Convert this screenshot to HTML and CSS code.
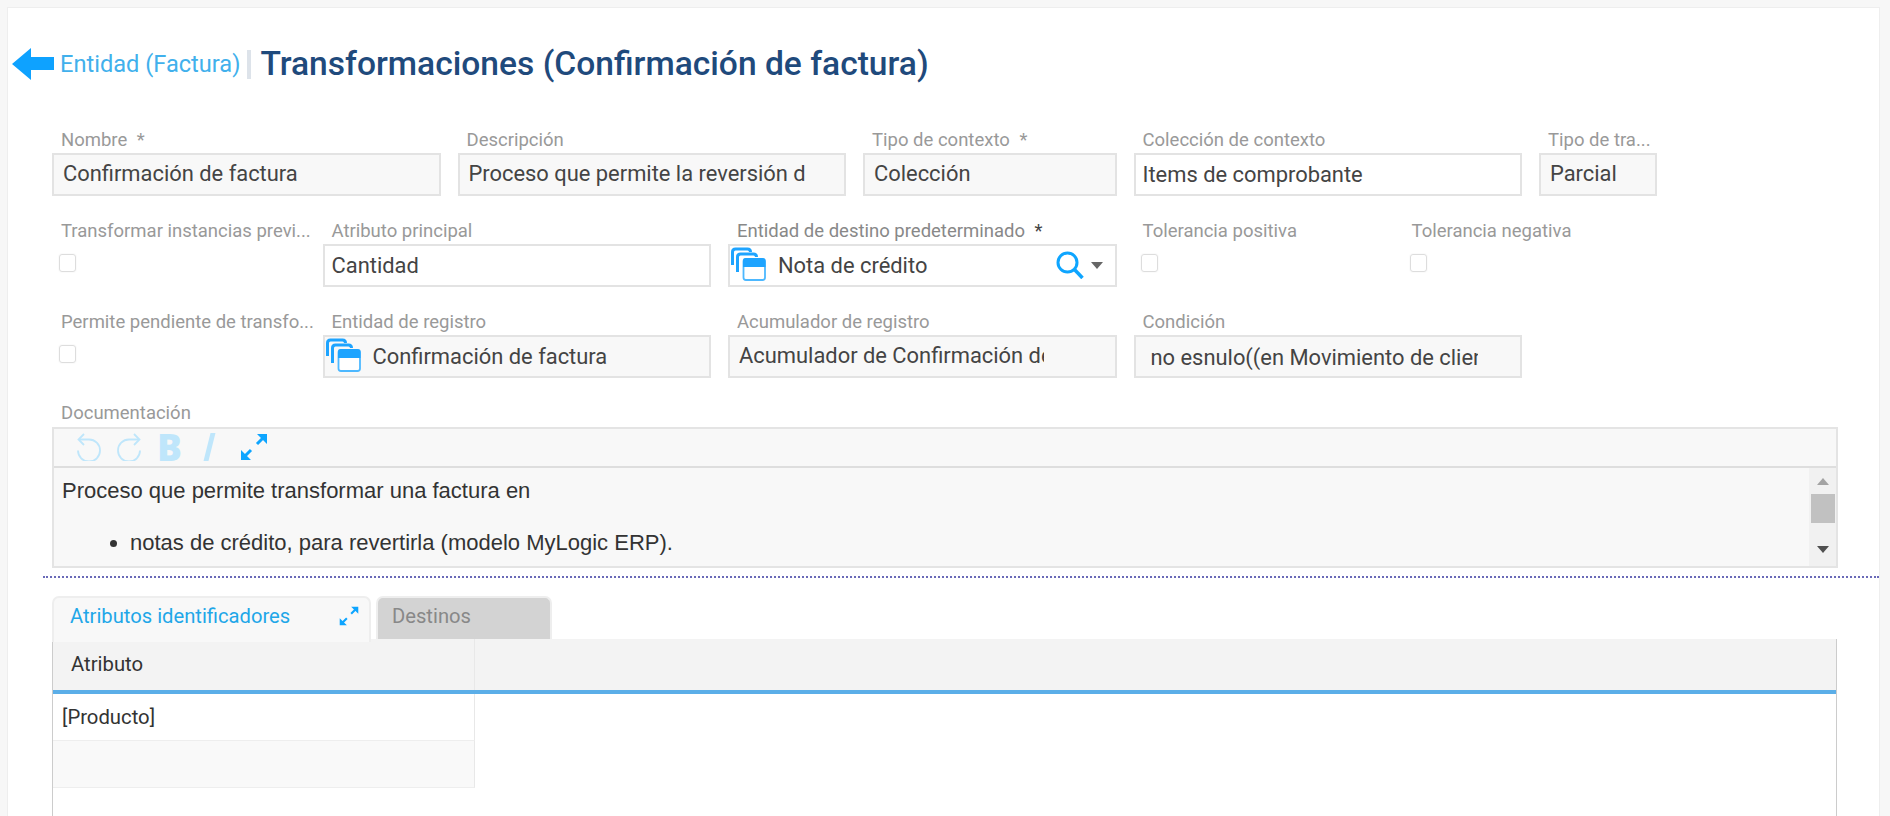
FILE: index.html
```html
<!DOCTYPE html>
<html lang="es">
<head>
<meta charset="UTF-8">
<title>Transformaciones (Confirmación de factura)</title>
<link rel="stylesheet" href="styles.css">
</head>
<body>
<svg class="defs" width="0" height="0">
  <symbol id="i-stack" viewBox="0 0 35 34">
    <path d="M1.500 18V5q0-3 3-3h12q3 0 3 3" fill="none" stroke="#1ea4ff" stroke-width="3"/>
    <path d="M6.500 25V10q0-3 3-3h13q3 0 3 3" fill="none" stroke="#1ea4ff" stroke-width="3"/>
    <rect x="12.500" y="12" width="21.500" height="21" rx="2.500" fill="#fff" stroke="#4db8ff" stroke-width="1.800"/>
    <path d="M12 20v-6q0-3 3-3h16q3.500 0 3.500 3v6z" fill="#1ea4ff"/>
  </symbol>
  <symbol id="i-expand" viewBox="0 0 28 28">
    <path d="M4 24L11 17M24 4L17 11" stroke="currentColor" stroke-width="3" fill="none"/>
    <path d="M1 17V27H11ZM27 11V1H17Z" fill="currentColor"/>
  </symbol>
</svg>

<div class="panel">
  <header class="head">
    <svg class="back" width="42" height="32" viewBox="0 0 42 32"><path d="M0 16L19 0V9H42V22H19V32Z" fill="#0ea2ff"/></svg>
    <a class="crumb">Entidad (Factura)</a>
    <span class="sep"></span>
    <h1>Transformaciones (Confirmación de factura)</h1>
  </header>

  <section class="form">
    <div class="row">
      <div class="field w-md"><label>Nombre <i>*</i></label><div class="box ro">Confirmación de factura</div></div>
      <div class="field w-md"><label>Descripción</label><div class="box ro"><span class="clip clip-desc">Proceso que permite la reversión d</span></div></div>
      <div class="field w-sm"><label>Tipo de contexto <i>*</i></label><div class="box ro">Colección</div></div>
      <div class="field w-md"><label>Colección de contexto</label><div class="box edit">Items de comprobante</div></div>
      <div class="field w-xs"><label>Tipo de tra...</label><div class="box ro">Parcial</div></div>
    </div>
    <div class="row">
      <div class="field w-sm"><label>Transformar instancias previ...</label><span class="check"></span></div>
      <div class="field w-md"><label>Atributo principal</label><div class="box edit">Cantidad</div></div>
      <div class="field w-md"><label class="dark">Entidad de destino predeterminado <i>*</i></label>
        <div class="box edit ent"><svg class="stack"><use href="#i-stack"/></svg><span class="grow">Nota de crédito</span>
          <svg class="search" width="28" height="28" viewBox="0 0 28 28"><circle cx="11.500" cy="11.500" r="9.500" fill="none" stroke="#0ea5ff" stroke-width="3"/><path d="M18 18l8.500 9" stroke="#0ea5ff" stroke-width="3.500" fill="none"/></svg>
          <span class="caret"></span></div></div>
      <div class="field w-chk"><label>Tolerancia positiva</label><span class="check"></span></div>
      <div class="field w-chk"><label>Tolerancia negativa</label><span class="check"></span></div>
    </div>
    <div class="row">
      <div class="field w-sm"><label>Permite pendiente de transfo...</label><span class="check"></span></div>
      <div class="field w-md"><label>Entidad de registro</label>
        <div class="box ro ent"><svg class="stack"><use href="#i-stack"/></svg><span class="grow">Confirmación de factura</span></div></div>
      <div class="field w-md"><label>Acumulador de registro</label><div class="box ro"><span class="clip clip-acum">Acumulador de Confirmación de</span></div></div>
      <div class="field w-md"><label>Condición</label><div class="box ro cond"><span class="clip clip-cond">no esnulo((en Movimiento de clien</span></div></div>
    </div>

    <div class="doc-field">
      <label>Documentación</label>
      <div class="doc">
        <div class="tools">
          <svg class="t-undo" width="26" height="28" viewBox="0 0 26 28"><path d="M3 6.500H13A11 11 0 1 1 2 17.500" fill="none" stroke="currentColor" stroke-width="1.800"/><path d="M8 1L2.500 6.500L8 12" fill="none" stroke="currentColor" stroke-width="1.800"/></svg>
          <svg class="t-undo" width="26" height="28" viewBox="0 0 26 28"><path d="M23 6.500H13A11 11 0 1 0 24 17.500" fill="none" stroke="currentColor" stroke-width="1.800"/><path d="M18 1L23.500 6.500L18 12" fill="none" stroke="currentColor" stroke-width="1.800"/></svg>
          <b class="t-b">B</b>
          <span class="t-i"></span>
          <svg class="t-exp" width="28" height="28"><use href="#i-expand"/></svg>
        </div>
        <div class="doc-body">
          <div class="doc-text">
            <p>Proceso que permite transformar una factura en</p>
            <ul><li>notas de crédito, para revertirla (modelo MyLogic ERP).</li></ul>
          </div>
          <div class="scroll"><span class="up"></span><span class="thumb"></span><span class="down"></span></div>
        </div>
      </div>
    </div>
  </section>

  <hr class="dots">

  <section class="detail">
    <nav class="tabs">
      <a class="tab on">Atributos identificadores<svg class="tab-exp" width="20" height="20"><use href="#i-expand"/></svg></a>
      <a class="tab">Destinos</a>
    </nav>
    <div class="grid">
      <div class="grid-head"><div class="cell">Atributo</div></div>
      <div class="grid-row"><div class="cell">[Producto]</div></div>
      <div class="grid-row alt"><div class="cell">&nbsp;</div></div>
    </div>
  </section>
</div>
</body>
</html>
```
FILE: styles.css
```css
*{box-sizing:border-box;margin:0}
html,body{height:816px;overflow:hidden}
body{background:#f7f7f7;font-family:Roboto,sans-serif;color:#444}
.defs{position:absolute}

.panel{margin:7px 10px 0 7px;background:#fff;border:1px solid #eee;border-bottom:0;height:809px;overflow:hidden}

/* header */
.head{display:flex;align-items:center;height:50px;margin-top:31px;padding-left:4px}
.back{flex:none}
.crumb{margin:-1px 0 0 6px;font-size:23.600px;color:#41b0ec}
.sep{width:4px;height:29px;margin:0 9px 0 7px;background:#dde3ea}
h1{margin-top:-2px;font-size:33.600px;font-weight:500;color:#1f4a7c}

/* form */
.form{padding:38.500px 0 0 44px}
.row{display:flex;gap:17px;margin-bottom:22.500px}
.field{display:flex;flex-direction:column;flex:none}
.w-xs{width:118px}
.w-sm{width:253.500px}
.w-md{width:388.500px}
.w-chk{width:252px}
label{display:block;height:25px;padding-left:9px;font-size:18.500px;line-height:24px;color:#999;white-space:nowrap}
label i{font-style:normal;margin-left:5px}
label.dark{color:#888}
label.dark i{color:#444}
.box{height:43.500px;border:2px solid #e3e3e3;padding:0 9px;font-size:21.900px;line-height:39px;white-space:nowrap;overflow:hidden}
.ro{background:#f8f8f8;line-height:38px}
.edit{background:#fff;padding-left:7px}
.clip{display:block;overflow:hidden}
.clip-desc{width:337px}
.clip-acum{width:305px}
.clip-cond{width:327px}
.cond{padding-left:15px;line-height:41px}
.check{display:block;width:17px;height:18px;margin:10px 0 0 7px;border:1px solid #ddd;border-radius:3px;box-shadow:0 0 2px #eee}

.ent{display:flex;align-items:center;padding:0 0 0 1px;line-height:normal}
.stack{width:35px;height:34px;flex:none;margin-right:12px;margin-bottom:2px}
.grow{flex:1}
.search{flex:none;margin-right:7px}
.caret{width:0;height:0;margin-right:12px;border:6px solid transparent;border-top:7px solid #666;border-bottom:0}

/* documentation */
.doc-field label{height:26px}
.doc{width:1786px;height:141px;border:2px solid #e4e4e4;background:#f8f8f8;display:flex;flex-direction:column}
.tools{height:39px;display:flex;align-items:center;border-bottom:2px solid #dedede;padding-left:22px;color:#bfe6fb;flex:none}
.t-undo{margin-right:14px}
.t-undo+.t-undo{margin-right:15px}
.t-b{font-family:"Open Sans",sans-serif;font-size:37px;font-weight:800;line-height:28px;width:26px}
.t-i{width:5px;height:28px;margin:0 28px 0 24px;background:#bfe6fb;transform:skewX(-14deg)}
.t-exp{color:#0ea5ff}
.doc-body{flex:1;display:flex;min-height:0}
.doc-text{flex:1;padding:10px 0 0 8px;font-family:"Liberation Sans",sans-serif;font-size:22px;line-height:26px;color:#333}
.doc-text ul{margin-top:26px;padding-left:68px}
.scroll{width:27px;background:#f1f1f1;display:flex;flex-direction:column;align-items:center}
.up,.down{width:0;height:0;border:6.500px solid transparent}
.up{margin-top:10px;border-bottom:7px solid #a3a3a3;border-top:0}
.thumb{width:24px;height:29px;margin-top:9px;background:#c1c1c1}
.down{margin-top:23px;border-top:7px solid #505050;border-bottom:0}

.dots{margin:8px 0 0 35px;border:0;border-top:2px dotted #6a6ab8}

/* tabs and grid */
.detail{margin:18px 0 0 44px;width:1785px}
.tabs{display:flex;height:43px;gap:5px;align-items:flex-start}
.tab{display:flex;align-items:center;width:176px;height:43px;padding:0 14px 4px;background:#d3d3d3;border:2px solid #eee;border-bottom:0;border-radius:7px 7px 0 0;font-size:20.200px;color:#888}
.tab.on{width:319px;height:46px;padding:0 10px 8px 16px;justify-content:space-between;background:#f8f8f8;color:#1fa7e8;position:relative}
.tab-exp{color:#0ea5ff}
.grid{height:200px;border:solid #ccc;border-width:0 1px}
.grid-head{height:55px;background:#f3f3f3;border-bottom:4px solid #5baee8}
.grid-head .cell{height:51px;padding:0 18px;line-height:51px}
.cell{width:422px;border-right:1px solid #e8e8e8;font-size:20.300px;color:#333}
.grid-row .cell{height:47px;padding-left:9px;line-height:46px;border-bottom:1px solid #eee}
.grid-row.alt .cell{background:#f9f9f9}
```
